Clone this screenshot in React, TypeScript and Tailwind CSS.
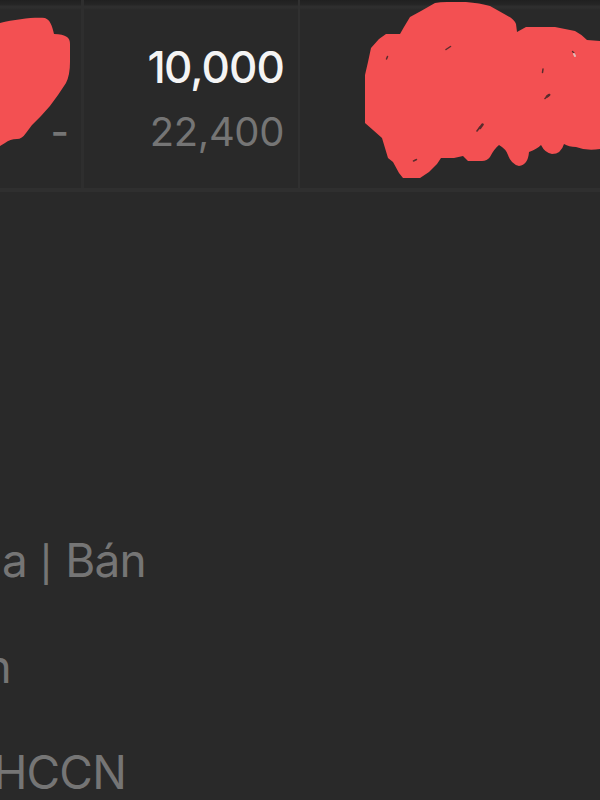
import React from 'react';

const LeftMark = () => (
  <svg className="absolute left-0 top-0" width="82" height="190" viewBox="0 0 82 190" fill="#f35052">
    <path d="M0 23C16 19 35 17 45 18C50 20 52 25 54 34C60 34 64 35 67 37Q70 39 70 44V62Q70 75 66 83L58 95Q50 107 41 116L32 125L26 133Q22 139 17 139Q10 139 5 143L0 146Z" />
  </svg>
);

const RightMark = () => (
  <svg className="absolute right-0 top-0" width="250" height="190" viewBox="350 0 250 190">
    <path
      d="M365 75L368 62L371 48L379 39L386 34H400L404 27L410 17L421 11L435 3Q440 2 447 2H466Q480 3 490 6L506 15Q514 19 516 24L517 32L526 27H555L575 31Q581 34 587 40L600 41V149Q586 151 576 147Q569 147 564 144Q561 154 552 154Q545 153 541 145Q537 149 529 152Q528 165 519 166Q511 164 508 155Q506 149 499 145Q494 149 490 157Q487 161 482 161H468L463 156L454 158H441L437 164L429 172L420 178H403L399 173L393 162L388 158L385 148L382 138L373 130L365 123Z"
      fill="#f35052"
    />
    <g stroke="#5a2c2d" strokeLinecap="round">
      <path d="M386.5 59L387.5 56.5M446 49.5L450.5 46.5M413.5 161L416.5 159.5M542.5 72.5L543 69" strokeWidth="1.5" />
      <path d="M477 131L480 127M545 98.5L549.5 94.5" strokeWidth="1.6" />
      <path d="M480 128L482.5 124.5M547 96.5L549 95" strokeWidth="2.6" />
      <path d="M572.5 51.5L574 53" strokeWidth="1.4" />
    </g>
    <path d="M574 54L575 56" stroke="#e3bbb9" strokeWidth="2" strokeLinecap="round" />
  </svg>
);

const App = () => {
  return (
    <div className="flex h-[800px] w-[600px] flex-col overflow-hidden bg-[#292929] font-['Inter','Liberation_Sans',sans-serif] text-[#757575]">
      <div className="relative grid h-[192px] shrink-0 grid-cols-[84px_216px_300px] border-b-4 border-[#2f2f2f] bg-[linear-gradient(#202020,#262626_5px,#2e2e2e_6px,#2e2e2e_8px,#292929_10px)]">
        <div className="relative flex justify-end border-r-[3px] border-[#2e2e2e] pr-[12px] pt-[107px]">
          <span className="text-[40px] font-medium leading-[50px]">-</span>
          <LeftMark />
        </div>

        <div className="flex flex-col items-end border-r-2 border-[#303030] pr-[14px] pt-[42px]">
          <span className="text-[44px] font-[450] leading-[50px] tracking-[-0.9px] text-[#f4f4f4]">
            1<span className="-ml-px">0</span>,000
          </span>
          <span className="mt-[15px] text-[40px] leading-[50px] tracking-[-0.4px]">22,400</span>
        </div>

        <div />
        <RightMark />
      </div>

      <div className="mt-[339px] flex flex-col gap-[47px] whitespace-nowrap text-[46px] leading-[59px] tracking-[-0.8px]">
        <div className="flex w-[146px] items-baseline justify-end">
          <span>Mua</span>
          <span className="ml-[13px] mr-[14px] text-[35px] font-medium leading-none">|</span>
          <span>Bán</span>
        </div>
        <div className="flex w-[11px] justify-end">Bán</div>
        <div className="flex w-[126px] justify-end">HCCN</div>
      </div>
    </div>
  );
};

export default App;
